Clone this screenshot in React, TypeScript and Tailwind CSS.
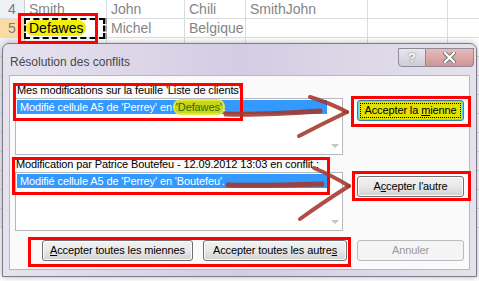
import type { ReactNode } from "react";

function Cell({ w, children, last }: { w: string; children?: ReactNode; last?: boolean }) {
  return (
    <div
      className={`${w} shrink-0 h-full pl-[4px] leading-[18px] text-[14px] text-[#858585] whitespace-nowrap ${
        last ? "" : "border-r border-[#dadcdd]"
      }`}
    >
      {children}
    </div>
  );
}

function SheetRow({ n, active, cells }: { n?: number; active?: boolean; cells: ReactNode[] }) {
  return (
    <div className="flex h-[19px] border-b border-[#dadcdd]">
      <div
        className={`w-[25px] shrink-0 h-full border-r border-[#c9ced6] text-center leading-[18px] text-[14px] text-[#7c7c7c] ${
          active ? "bg-[#f9dca4]" : "bg-[#edf0f5]"
        }`}
      >
        {n}
      </div>
      <Cell w="w-[82px]">{cells[0]}</Cell>
      <Cell w="w-[78px]">{cells[1]}</Cell>
      <Cell w="w-[61px]">{cells[2]}</Cell>
      <Cell w="w-[122px]">{cells[3]}</Cell>
      <Cell w="w-[80px]">{cells[4]}</Cell>
      <Cell w="flex-1" last />
    </div>
  );
}

function Button({
  children,
  width,
  kind = "normal",
}: {
  children: ReactNode;
  width: string;
  kind?: "normal" | "default" | "disabled";
}) {
  const label = <span className="whitespace-nowrap">{children}</span>;
  if (kind === "default") {
    return (
      <div
        className={`${width} h-[21px] rounded-[3px] border border-[#3c7fb1] bg-[#e1e100] shadow-[inset_0_0_0_1px_#63d3f6] p-[3px]`}
      >
        <div className="h-full outline outline-1 outline-dotted outline-black flex items-center justify-center text-[11px] text-black leading-none">
          {label}
        </div>
      </div>
    );
  }
  if (kind === "disabled") {
    return (
      <div
        className={`${width} h-[21px] rounded-[3px] border border-[#b8bcbf] bg-[#f4f4f4] flex items-center justify-center text-[11px] text-[#9a9a9a]`}
      >
        {label}
      </div>
    );
  }
  return (
    <div
      className={`${width} h-[21px] rounded-[3px] border border-[#707070] bg-gradient-to-b from-[#f2f2f2] via-[#e8e8e8] to-[#d2d2d2] shadow-[inset_0_0_0_1px_#fbfbfb] flex items-center justify-center text-[11px] text-black`}
    >
      {label}
    </div>
  );
}

function ListBox({ height, children }: { height: string; children: ReactNode }) {
  return (
    <div className={`${height} border border-[#b5b8be] bg-white flex`}>
      <div className="flex-1 pt-[1px] pl-[1px]">
        <div className="h-[14px] bg-[#3399ff] text-white text-[11px] leading-[14px] pl-[3px] whitespace-nowrap">
          {children}
        </div>
      </div>
      <div className="w-[15px] flex flex-col justify-end items-center pb-[6px]">
        <div className="w-0 h-0 border-l-[4px] border-r-[4px] border-t-[4px] border-l-transparent border-r-transparent border-t-[#c4c4c4]" />
      </div>
    </div>
  );
}

function RedBox({ className }: { className: string }) {
  return <div className={`absolute border-[3px] border-[#ff0000] ${className}`} />;
}

export default function App() {
  return (
    <div className="relative w-[479px] h-[281px] overflow-hidden bg-white font-['Liberation_Sans',Arial,sans-serif]">
      {/* worksheet behind the dialog */}
      <div className="flex flex-col">
        <SheetRow n={4} cells={["Smith", "John", "Chili", "SmithJohn", ""]} />
        <SheetRow
          n={5}
          active
          cells={[
            <span className="ml-[-3px] px-[3px] rounded-full bg-[#f1f000] text-black">Defawes</span>,
            "Michel",
            "Belgique",
            "",
            "",
          ]}
        />
        {[6, 7, 8, 9, 10, 11, 12, 13, 14, 15].map((n) => (
          <SheetRow key={n} cells={["", "", "", "", ""]} />
        ))}
      </div>

      {/* copy marquee on A5 */}
      <div className="absolute left-[24px] top-[18px] w-[81px] h-[21px] border-2 border-dashed border-black" />
      <div className="absolute left-[102px] top-[18px] w-[5px] h-[21px] border-r-2 border-dashed border-[#9a9a9a]" />

      {/* dialog */}
      <div className="absolute left-[2px] top-[43px] w-[475px] h-[234px] rounded-t-[7px] border border-[#7e7a8c] bg-gradient-to-r from-[#e6e3ee] via-[#d4cce3] to-[#e5e2eb] shadow-[0_0_6px_rgba(0,0,0,0.3)] flex flex-col">
        <div className="h-[31px] flex items-start">
          <div className="pl-[7px] pt-[11px] text-[12px] leading-[14px] text-[#474747]">
            Résolution des conflits
          </div>
          <div className="ml-auto mr-[2px] mt-[4px] flex">
            <div className="w-[28px] h-[19px] rounded-bl-[4px] border border-[#8d8a98] bg-gradient-to-b from-[#e9e7ee] to-[#cfcbd8] flex items-center justify-center text-[13px] font-bold text-white [text-shadow:0_0_2px_#555]">
              ?
            </div>
            <div className="w-[48px] h-[19px] rounded-br-[4px] border border-l-0 border-[#8d8a98] bg-gradient-to-b from-[#e6bcbc] to-[#d19494] flex items-center justify-center">
              <svg width="13" height="11" viewBox="0 0 13 11">
                <path d="M2 1 L11 10 M11 1 L2 10" stroke="#6a6a6a" strokeWidth="4" strokeLinecap="round" />
                <path d="M2 1 L11 10 M11 1 L2 10" stroke="#ffffff" strokeWidth="2.4" strokeLinecap="round" />
              </svg>
            </div>
          </div>
        </div>

        <div className="mx-[6px] h-[195px] border border-[#b9b5c6] bg-[#fafafa] flex flex-col text-[11px] tracking-[-0.12px] text-black">
          <div className="mt-[7px] flex items-start">
            <div className="ml-[5px] w-[328px]">
              <div className="h-[15px] leading-[15px] pl-[2px] whitespace-nowrap">
                Mes modifications sur la feuille 'Liste de clients'
              </div>
              <ListBox height="h-[57px]">
                Modifié cellule A5 de 'Perrey' en{" "}
                <span className="rounded-[6px] bg-[#c9d61a] text-[#2f6a00] px-[1px] shadow-[0_0_0_2px_#e4e83a]">
                  'Defawes'
                </span>
                .
              </ListBox>
            </div>
            <div className="ml-[14px] mt-[17px]">
              <Button width="w-[107px]" kind="default">
                Accepter la <u className="underline-offset-1">m</u>ienne
              </Button>
            </div>
          </div>

          <div className="mt-[1px] flex items-start">
            <div className="ml-[5px] w-[328px]">
              <div className="h-[16px] leading-[16px] pl-[1px] whitespace-nowrap">
                Modification par Patrice Boutefeu - 12.09.2012 13:03 en conflit :
              </div>
              <ListBox height="h-[59px]">Modifié cellule A5 de 'Perrey' en 'Boutefeu'.</ListBox>
            </div>
            <div className="ml-[14px] mt-[20px]">
              <Button width="w-[107px]">
                A<u className="underline-offset-1">c</u>cepter l'autre
              </Button>
            </div>
          </div>

          <div className="mt-[9px] ml-[32px] flex gap-[10px]">
            <Button width="w-[151px]">
              <u className="underline-offset-1">A</u>ccepter toutes les miennes
            </Button>
            <Button width="w-[144px]">
              Accepter toutes les autre<u className="underline-offset-1">s</u>
            </Button>
            <Button width="w-[107px]" kind="disabled">
              Annuler
            </Button>
          </div>
        </div>
      </div>

      {/* annotations */}
      <RedBox className="left-[18px] top-[13px] w-[80px] h-[31px]" />
      <RedBox className="left-[13px] top-[83px] w-[230px] h-[38px]" />
      <RedBox className="left-[351px] top-[96px] w-[120px] h-[31px]" />
      <RedBox className="left-[12px] top-[157px] w-[318px] h-[38px]" />
      <RedBox className="left-[352px] top-[171px] w-[119px] h-[30px]" />
      <RedBox className="left-[28px] top-[237px] w-[323px] h-[30px]" />

      <svg className="absolute inset-0 pointer-events-none" width="479" height="281" viewBox="0 0 479 281">
        <g fill="none" stroke="#a5362b" strokeOpacity="0.88" strokeLinecap="round" strokeLinejoin="round">
          <path d="M226 114 C 255 115, 290 113, 320 111" strokeWidth="5" />
          <path d="M310 97 Q 330 103, 347 112" strokeWidth="4" />
          <path d="M347 112 Q 322 124, 299 136" strokeWidth="4" />
          <path d="M228 185 C 258 186, 292 185, 322 184" strokeWidth="5" />
          <path d="M314 168 Q 333 176, 349 186" strokeWidth="4" />
          <path d="M349 186 Q 322 203, 300 219" strokeWidth="4" />
        </g>
      </svg>
    </div>
  );
}
